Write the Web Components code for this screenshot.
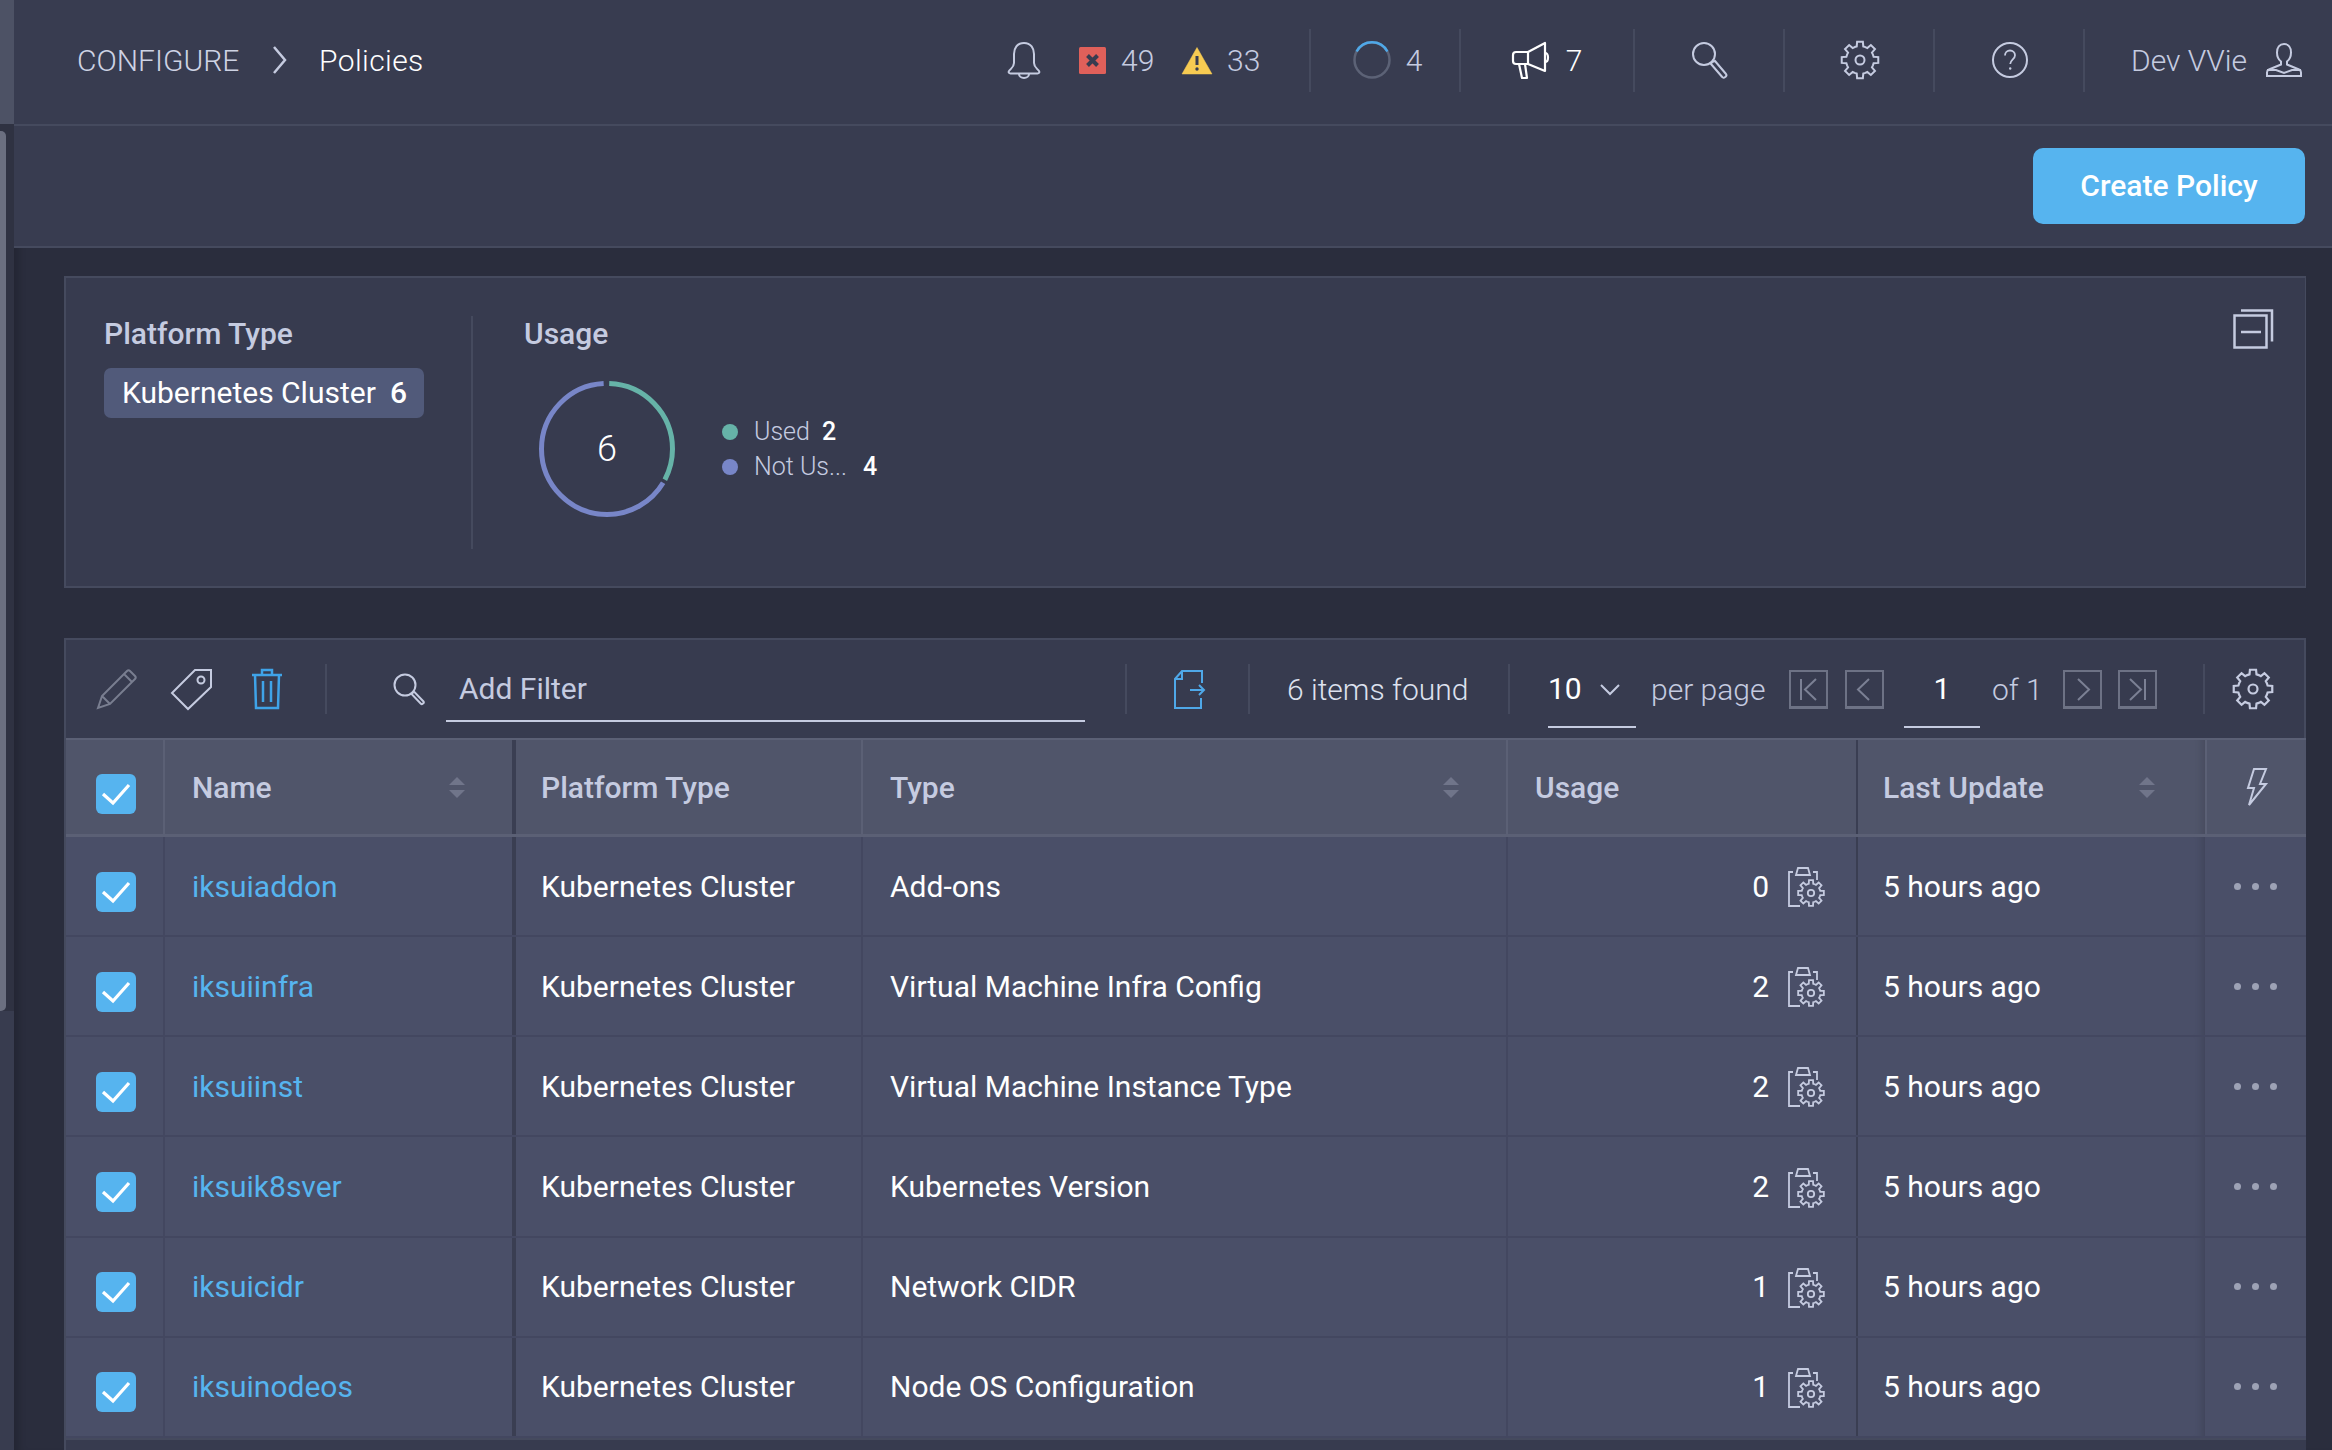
<!DOCTYPE html>
<html>
<head>
<meta charset="utf-8">
<title>Policies</title>
<style>
    html, body { margin: 0; padding: 0; height: 100%; background: #2a2d3d; overflow: hidden; }
    body { font-family: Roboto, "Liberation Sans", sans-serif; color: #fff; }
</style>
</head>
<body>
<policies-page></policies-page>
<script>
// gear outline shared by a few icons
function gearPath(cx, cy, outer, inner, teeth) {
    let d = '';
    let step = Math.PI * 2 / teeth;
    for (let i = 0; i < teeth; i++) {
        let a = i * step - Math.PI / 2;
        let pts = [
            [inner, a - step * 0.5],
            [inner, a - step * 0.3],
            [outer, a - step * 0.2],
            [outer, a + step * 0.2],
            [inner, a + step * 0.3]
        ];
        pts.forEach((p, j) => {
            let x = (cx + p[0] * Math.cos(p[1])).toFixed(2);
            let y = (cy + p[0] * Math.sin(p[1])).toFixed(2);
            d += ((i === 0 && j === 0) ? 'M' : 'L') + x + ' ' + y + ' ';
        });
    }
    return d + 'Z';
}

const ICONS = {
    bell: [34, 38, `<path d="M17 2c-7 0-10 5.500-10 11v9c0 4-3 5.500-5 8-.8 1.500 0 2.500 1.500 2.500h27c1.500 0 2.300-1 1.500-2.500-2-2.500-5-4-5-8v-9c0-5.500-3-11-10-11z"/><path d="M12 33a5 4 0 0 0 10 0"/>`],
    error: [27, 27, `<rect width="27" height="27" rx="1.500" fill="#e0605a" stroke="none"/><path d="M8.500 8.500l10 10M18.500 8.500l-10 10" stroke="#383c50" stroke-width="4"/>`],
    warn: [30, 27, `<path d="M15 0.500L30 27H0z" fill="#f7cb52" stroke="#f7cb52" stroke-width="0.500" stroke-linejoin="round"/><path d="M15 9v9" stroke="#383c50" stroke-width="3"/><circle cx="15" cy="22" r="1.700" fill="#383c50" stroke="none"/>`],
    spinner: [38, 38, `<circle cx="19" cy="19" r="17.500" stroke="#5c6276" stroke-width="2.500"/><path d="M3.600 10.500A17.500 17.500 0 0 1 34.400 10.500" stroke="#4fa8e8" stroke-width="2.500"/>`],
    horn: [36, 38, `<g stroke="#fff" stroke-width="2.200" stroke-linejoin="round"><path d="M33 2v28L16 23H4c-2 0-3-1-3-3v-6c0-2 1-3 3-3h12z"/><path d="M16 11v12M33 12c2 0 3 2 3 4.500s-1 4.500-3 4.500M7 23l3 14h5l-2-14"/></g>`],
    search: [36, 38, `<circle cx="13" cy="13" r="11"/><path d="M21 21l3-1 11 13c.8 1 .4 2-.4 2.700l-.8.600c-.8.700-1.800.700-2.600-.3L20 23z"/>`],
    searchSmall: [32, 32, `<circle cx="12" cy="12" r="10.500"/><path d="M19.500 19.500l2-.5 9 9.500c.6.700.4 1.300-.2 1.800l-.6.500c-.6.500-1.200.5-1.800-.1L19 21.500z"/>`],
    gear: [36, 38, `<path d="${gearPath(18, 19, 18.500, 14, 8)}"/><circle cx="18" cy="19" r="4.500"/>`],
    gearBig: [40, 40, `<path d="${gearPath(20, 20, 19.500, 15, 8)}"/><circle cx="20" cy="20" r="4.500"/>`],
    help: [36, 38, `<circle cx="18" cy="19" r="17"/><path d="M13 14.500c0-3 2.200-5 5-5s5 2 5 4.700c0 4-4.500 4.300-4.800 8.800" stroke-width="1.800"/><circle cx="18.200" cy="27.500" r="1.200" fill="#c5cbe0" stroke="none"/>`],
    user: [36, 36, `<path d="M18 2c-4.500 0-7 3.500-7 8.500 0 4 2 7.500 4 9v3l-12 5c-1.500.7-2 1.500-2 3V34h34v-3.500c0-1.500-.5-2.300-2-3l-12-5v-3c2-1.500 4-5 4-9C25 5.500 22.500 2 18 2z"/><path d="M1 28h9l8 3 8-3h9"/>`],
    collapse: [40, 40, `<rect x="1.500" y="6.500" width="32" height="32"/><path d="M8 23h20M8 1.500h31v31"/>`],
    pencil: [40, 40, `<path d="M1 39l4-12L30 2c1-1 2-1 3 0l5 5c1 1 1 2 0 3L13 35zM5 27l8 8M27 5l8 8"/>`],
    tag: [41, 41, `<path d="M24 1h16v17L17 40 1 24z"/><circle cx="30" cy="11" r="3.500"/>`],
    trash: [30, 40, `<path d="M0 6h30M3 6l1 33h22l1-33M10 6V1h10v5M11 12v21M19 12v21"/>`],
    exportFile: [32, 40, `<path d="M29 14V2H9L2 10v29h26V29M9 2v8H2"/><path d="M17 21h14M26 16l5 5-5 5"/>`],
    first: [35, 34, `<path d="M10 7v21M25 7L14 17.500 25 28"/>`],
    prev: [35, 34, `<path d="M22 7L11 17.500 22 28"/>`],
    next: [35, 34, `<path d="M13 7l11 10.500L13 28"/>`],
    last: [35, 34, `<path d="M25 7v21M10 7l11 10.500L10 28"/>`],
    clipboard: [36, 40, `<path d="M5 5H1v34h11M25 5h4v8M8 8l2-7h10l2 7z"/><path d="${gearPath(23, 26, 13, 9.500, 8)}"/><circle cx="23" cy="26" r="3.200"/>`],
    bolt: [20, 38, `<path d="M7 1h12l-6 15h6L2 37l5-17H1z"/>`],
    check: [40, 40, `<path d="M7 20l10 9 16-18" stroke="#fff" stroke-width="3.200"/>`],
    chev: [16, 30, `<path d="M2 2l11 13L2 28"/>`],
    down: [20, 12, `<path d="M1 1l9 9 9-9"/>`]
};

class UiIcon extends HTMLElement {
    constructor() {
        super();
        let shadowRoot = this.attachShadow({mode: 'open'});
        let icon = ICONS[this.getAttribute('name')];
        let sw = this.getAttribute('sw') || '2';
        shadowRoot.innerHTML = `
            <style>
                :host { display: block; flex: none; line-height: 0; color: #c5cbe0; }
                svg { display: block; overflow: visible; fill: none; stroke: currentColor; }
            </style>
            <svg width="${icon[0]}" height="${icon[1]}" viewBox="0 0 ${icon[0]} ${icon[1]}" stroke-width="${sw}">${icon[2]}</svg>
        `;
    }
}

class AppHeader extends HTMLElement {
    constructor() {
        super();
        let shadowRoot = this.attachShadow({mode: 'open'});
        shadowRoot.innerHTML = `
            <style>
                :host { display: flex; align-items: center; height: 120px; padding-bottom: 4px; background: #383c50; border-bottom: 2px solid #454a5e; font-size: 30px; font-weight: 300; color: #c5cbe0; }
                .crumb { margin-left: 63px; width: 162px; white-space: nowrap; color: #ced3e4; }
                .here { margin-left: 31px; color: #fff; font-weight: 300; letter-spacing: .4px; }
                .alerts { margin-left: auto; display: flex; align-items: center; width: 302px; }
                .cell { display: flex; align-items: center; justify-content: center; width: 150px; height: 63px; border-left: 2px solid #454a5e; box-sizing: border-box; gap: 15px; }
                .nudge { padding-left: 5px; }
                .nudge2 { padding-left: 2px; }
                .wide { width: 174px; gap: 18px; color: #fff; }
                .user { width: 249px; padding-left: 46px; justify-content: flex-start; gap: 19px; }
                .n1 { margin-left: 15px; width: 33px; }
                .n2 { margin-left: 15px; width: 33px; }
                .e { margin-left: 38px; }
                .w { margin-left: 28px; }
            </style>
            <span class="crumb">CONFIGURE</span>
            <ui-icon name="chev" sw="2.500" style="margin-left:33px"></ui-icon>
            <span class="here">Policies</span>
            <div class="alerts">
                <ui-icon name="bell" sw="2"></ui-icon>
                <ui-icon class="e" name="error"></ui-icon><span class="n1">49</span>
                <ui-icon class="w" name="warn"></ui-icon><span class="n2">33</span>
            </div>
            <div class="cell nudge"><ui-icon name="spinner"></ui-icon><span>4</span></div>
            <div class="cell wide"><ui-icon name="horn" style="color:#fff"></ui-icon><span>7</span></div>
            <div class="cell"><ui-icon name="search"></ui-icon></div>
            <div class="cell nudge2"><ui-icon name="gear"></ui-icon></div>
            <div class="cell nudge2"><ui-icon name="help"></ui-icon></div>
            <div class="cell user"><span>Dev VVie</span><ui-icon name="user"></ui-icon></div>
        `;
    }
}

class ActionBar extends HTMLElement {
    constructor() {
        super();
        let shadowRoot = this.attachShadow({mode: 'open'});
        shadowRoot.innerHTML = `
            <style>
                :host { display: flex; align-items: center; justify-content: flex-end; height: 120px; padding-right: 27px; background: #383c50; border-bottom: 2px solid #454a5e; }
                button { width: 272px; height: 76px; margin-top: 0; padding: 0 0 2px; border: 0; border-radius: 10px; background: #56b4ef; color: #fff; font: 500 30px Roboto, sans-serif; }
            </style>
            <button><slot></slot></button>
        `;
    }
}

class SummaryPanel extends HTMLElement {
    constructor() {
        super();
        let shadowRoot = this.attachShadow({mode: 'open'});
        shadowRoot.innerHTML = `
            <style>
                :host { display: flex; position: relative; box-sizing: border-box; height: 312px; margin: 28px 26px 0 50px; padding-top: 38px; background: #373b4f; border: 2px solid #454a5e; border-right-width: 1px; }
                .platform { width: 407px; box-sizing: border-box; padding-left: 38px; height: 233px; border-right: 2px solid #454a5e; flex: none; }
                .usage { padding-left: 51px; flex: 1; }
                h3 { margin: 0; font-size: 30px; font-weight: 500; line-height: 36px; color: #c5cbe0; }
                .chip { display: flex; justify-content: space-between; width: 320px; height: 50px; margin-top: 16px; padding: 0 17px 0 18px; box-sizing: border-box; line-height: 50px; border-radius: 7px; background: #515a7a; font-size: 30px; }
                .chip b { font-weight: 500; }
                .chart { display: flex; align-items: center; margin: 29px 0 0 15px; }
                .donut { position: relative; width: 136px; height: 136px; flex: none; }
                .donut span { position: absolute; inset: 0; display: flex; align-items: center; justify-content: center; font-size: 36px; font-weight: 300; }
                .legend { margin-left: 47px; font-size: 25px; font-weight: 300; color: #c5cbe0; }
                .legend div { display: flex; align-items: center; height: 35px; }
                .dot { width: 16px; height: 16px; border-radius: 50%; margin-right: 16px; }
                .legend b { font-weight: 500; color: #fff; }
                .label1 { width: 68px; }
                .label2 { width: 109px; }
                ui-icon { position: absolute; top: 31px; right: 32px; }
            </style>
            <div class="platform">
                <h3>Platform Type</h3>
                <div class="chip"><span>Kubernetes Cluster</span><b>6</b></div>
            </div>
            <div class="usage">
                <h3>Usage</h3>
                <div class="chart">
                    <div class="donut">
                        <svg width="136" height="136" viewBox="0 0 136 136" fill="none" stroke-width="5">
                            <circle cx="68" cy="68" r="65.500" stroke="#7886c8" pathLength="360" stroke-dasharray="236 124" stroke-dashoffset="-121" transform="rotate(-90 68 68)"/>
                            <circle cx="68" cy="68" r="65.500" stroke="#66b3a8" pathLength="360" stroke-dasharray="116 244" stroke-dashoffset="-2" transform="rotate(-90 68 68)"/>
                        </svg>
                        <span>6</span>
                    </div>
                    <div class="legend">
                        <div><i class="dot" style="background:#66b3a8"></i><span class="label1">Used</span><b>2</b></div>
                        <div><i class="dot" style="background:#7886c8"></i><span class="label2">Not Us...</span><b>4</b></div>
                    </div>
                </div>
            </div>
            <ui-icon name="collapse" sw="2.500"></ui-icon>
        `;
    }
}

class TableToolbar extends HTMLElement {
    constructor() {
        super();
        let shadowRoot = this.attachShadow({mode: 'open'});
        shadowRoot.innerHTML = `
            <style>
                :host { display: flex; align-items: center; height: 98px; background: #373b4f; border-top: 2px solid #454a5e; box-shadow: inset -2px 0 0 #454a5e; font-size: 30px; color: #c5cbe0; font-weight: 300; white-space: nowrap; }
                .sep { flex: none; width: 2px; height: 50px; background: #454a5e; }
                .filter { flex: none; box-sizing: border-box; align-self: flex-start; width: 639px; height: 82px; padding: 31px 0 0 13px; line-height: 36px; border-bottom: 2px solid #c5cbe0; font-weight: 400; }
                .under { flex: none; box-sizing: border-box; align-self: flex-start; height: 88px; padding-top: 31px; line-height: 36px; border-bottom: 2px solid #c5cbe0; color: #fff; font-weight: 400; }
                .count { flex: none; width: 183px; color: #dde1ee; }
                .per { display: flex; align-items: flex-start; justify-content: space-between; width: 88px; }
                .per ui-icon { margin: 13px 16px 0 0; }
                .page { width: 76px; text-align: center; }
                .box { box-sizing: border-box; width: 39px; height: 39px; border: 2px solid #6d7285; border-bottom-width: 3px; color: #7b8094; }
                .grey { color: #797e90; }
            </style>
            <ui-icon class="grey" name="pencil" style="margin-left:31px"></ui-icon>
            <ui-icon name="tag" style="margin-left:34px"></ui-icon>
            <ui-icon name="trash" style="margin-left:40px;color:#3fa3e8" sw="2.500"></ui-icon>
            <div class="sep" style="margin-left:43px"></div>
            <ui-icon name="searchSmall" style="margin-left:66px"></ui-icon>
            <div class="filter" style="margin-left:21px">Add Filter</div>
            <div class="sep" style="margin-left:40px"></div>
            <ui-icon name="exportFile" style="margin-left:46px;color:#4fa8e8"></ui-icon>
            <div class="sep" style="margin-left:43px"></div>
            <span class="count" style="margin-left:37px">6 items found</span>
            <div class="sep" style="margin-left:38px"></div>
            <div class="under per" style="margin-left:38px"><span>10</span><ui-icon name="down"></ui-icon></div>
            <span style="margin-left:15px;width:115px;flex:none">per page</span>
            <ui-icon class="box" name="first" style="margin-left:23px"></ui-icon>
            <ui-icon class="box" name="prev" style="margin-left:17px"></ui-icon>
            <div class="under page" style="margin-left:20px">1</div>
            <span style="margin-left:12px;width:50px;flex:none">of 1</span>
            <ui-icon class="box" name="next" style="margin-left:21px"></ui-icon>
            <ui-icon class="box" name="last" style="margin-left:16px"></ui-icon>
            <div class="sep" style="margin-left:46px"></div>
            <ui-icon name="gearBig" style="margin-left:28px" sw="2.200"></ui-icon>
        `;
    }
}

class CheckBox extends HTMLElement {
    constructor() {
        super();
        let shadowRoot = this.attachShadow({mode: 'open'});
        shadowRoot.innerHTML = `
            <style>
                :host { display: block; width: 40px; height: 40px; border-radius: 6px; background: #56b4ef; }
            </style>
            <ui-icon name="check"></ui-icon>
        `;
    }
}

const TABLE_STYLE = `
    :host { display: grid; grid-template-columns: 99px 351px 347px 645px 350px 347px 101px; }
    .cell { display: flex; align-items: center; box-sizing: border-box; min-width: 0; white-space: nowrap; }
    .pad { padding-left: 27px; }
    .tight { padding-left: 25px; }
    .thick { border-right: 4px solid #3a3e52; }
    .dark { border-right: 2px solid #3a3e52; }
`;

class TableHead extends HTMLElement {
    constructor() {
        super();
        let shadowRoot = this.attachShadow({mode: 'open'});
        shadowRoot.innerHTML = `
            <style>
                ${TABLE_STYLE}
                :host { height: 99px; box-sizing: border-box; background: #50556a; border-top: 2px solid #5b6075; border-bottom: 3px solid #5b6075; color: #c5cbe0; font-size: 30px; font-weight: 500; }
                .line { border-right: 2px solid #5b6075; }
                .box { justify-content: center; padding: 14px 0 0 3px; }
                .sort { display: flex; flex-direction: column; gap: 5px; margin-left: auto; margin-right: 47px; }
                .sort i { width: 0; height: 0; border: 8px solid transparent; border-top: 0; border-bottom: 8px solid #70758a; }
                .sort i + i { border-bottom: 0; border-top: 8px solid #70758a; }
                .bolt { justify-content: center; border-left: 2px solid #5b6075; }
                .shadow { box-shadow: inset -10px 0 8px -8px rgba(0,0,0,.14); }
            </style>
            <div class="cell box line"><check-box></check-box></div>
            <div class="cell pad thick">Name<span class="sort"><i></i><i></i></span></div>
            <div class="cell tight line">Platform Type</div>
            <div class="cell pad line">Type<span class="sort"><i></i><i></i></span></div>
            <div class="cell pad dark">Usage</div>
            <div class="cell tight shadow">Last Update<span class="sort" style="margin-right:50px"><i></i><i></i></span></div>
            <div class="cell bolt"><ui-icon name="bolt"></ui-icon></div>
        `;
    }
}

class PolicyRow extends HTMLElement {
    constructor() {
        super();
        let shadowRoot = this.attachShadow({mode: 'open'});
        shadowRoot.innerHTML = `
            <style>
                ${TABLE_STYLE}
                :host { height: 100.170px; box-sizing: border-box; background: #4a4f68; border-bottom: 2px solid #434760; font-size: 30px; }
                .line { border-right: 2px solid #434760; }
                .box { justify-content: center; padding: 11px 0 0 3px; }
                a { color: #56b4ef; text-decoration: none; }
                .usage { justify-content: flex-end; padding-right: 32px; gap: 19px; }
                .usage ui-icon { margin-top: 2px; }
                .shadow { box-shadow: inset -10px 0 8px -8px rgba(0,0,0,.16); }
                .more { justify-content: center; gap: 11px; }
                .more i { width: 7px; height: 7px; border-radius: 50%; background: #9da2b5; }
            </style>
            <div class="cell box line"><check-box></check-box></div>
            <div class="cell pad thick"><a href="#">${this.getAttribute('name')}</a></div>
            <div class="cell tight line">Kubernetes Cluster</div>
            <div class="cell pad line">${this.getAttribute('type')}</div>
            <div class="cell usage dark">${this.getAttribute('usage')}<ui-icon name="clipboard" sw="1.800"></ui-icon></div>
            <div class="cell tight shadow">5 hours ago</div>
            <div class="cell more"><i></i><i></i><i></i></div>
        `;
    }
}

class PolicyTable extends HTMLElement {
    constructor() {
        super();
        let shadowRoot = this.attachShadow({mode: 'open'});
        shadowRoot.innerHTML = `
            <style>
                :host { display: block; margin: 50px 26px 0 50px; border-left: 2px solid #454a5e; background: #373b4f; }
                .foot { height: 12px; border-top: 2px solid #454a5e; }
            </style>
            <table-toolbar></table-toolbar>
            <table-head></table-head>
            <slot></slot>
            <div class="foot"></div>
        `;
    }
}

class PoliciesPage extends HTMLElement {
    constructor() {
        super();
        let shadowRoot = this.attachShadow({mode: 'open'});
        shadowRoot.innerHTML = `
            <style>
                :host { display: flex; height: 1450px; overflow: hidden; background: #2a2d3d; }
                .rail { flex: none; width: 14px; background: #383c4f; }
                .rail .top { height: 124px; background: #4d5265; }
                .rail .track { height: 887px; box-sizing: border-box; padding-top: 7px; background: #2f3242; }
                .rail .thumb { width: 6px; height: 880px; border-radius: 0 5px 5px 0; background: #6b6f80; }
                main { flex: 1; min-width: 0; background: #2a2d3d; box-shadow: inset 10px 0 8px -6px rgba(0,0,0,.18); }
            </style>
            <div class="rail"><div class="top"></div><div class="track"><div class="thumb"></div></div></div>
            <main>
                <app-header></app-header>
                <action-bar>Create Policy</action-bar>
                <summary-panel></summary-panel>
                <policy-table>
                    <policy-row name="iksuiaddon" type="Add-ons" usage="0"></policy-row>
                    <policy-row name="iksuiinfra" type="Virtual Machine Infra Config" usage="2"></policy-row>
                    <policy-row name="iksuiinst" type="Virtual Machine Instance Type" usage="2"></policy-row>
                    <policy-row name="iksuik8sver" type="Kubernetes Version" usage="2"></policy-row>
                    <policy-row name="iksuicidr" type="Network CIDR" usage="1"></policy-row>
                    <policy-row name="iksuinodeos" type="Node OS Configuration" usage="1"></policy-row>
                </policy-table>
            </main>
        `;
    }
}

window.customElements.define('ui-icon', UiIcon);
window.customElements.define('check-box', CheckBox);
window.customElements.define('app-header', AppHeader);
window.customElements.define('action-bar', ActionBar);
window.customElements.define('summary-panel', SummaryPanel);
window.customElements.define('table-toolbar', TableToolbar);
window.customElements.define('table-head', TableHead);
window.customElements.define('policy-row', PolicyRow);
window.customElements.define('policy-table', PolicyTable);
window.customElements.define('policies-page', PoliciesPage);
</script>
</body>
</html>
